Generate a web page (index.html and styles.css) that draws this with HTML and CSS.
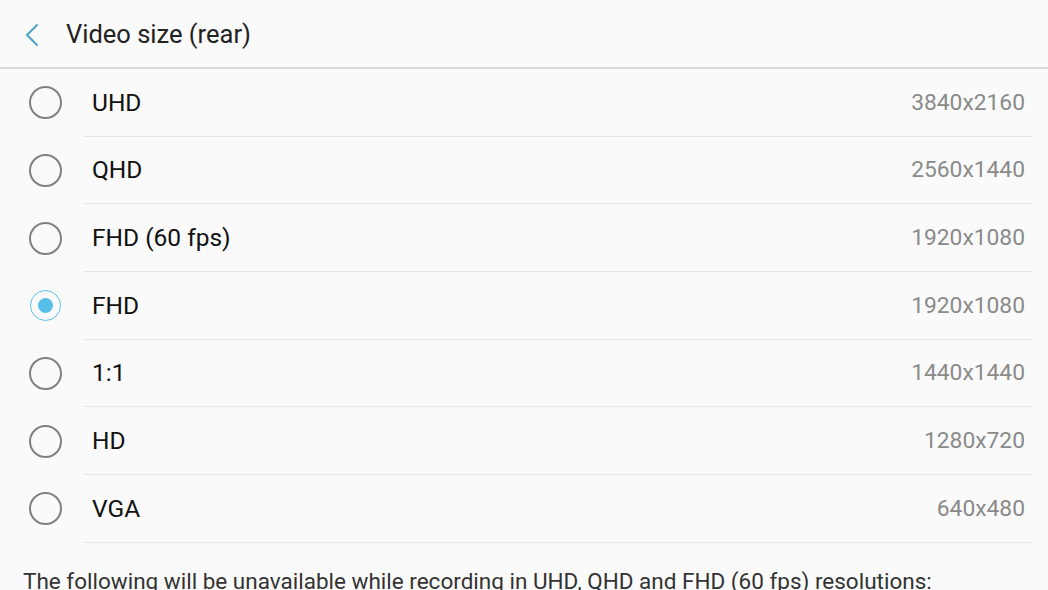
FILE: index.html
```html
<!DOCTYPE html>
<html>
  <head>
    <meta name="viewport" content="width=device-width, initial-scale=1.0" />
    <title>Video size (rear)</title>
    <link rel="stylesheet" href="styles.css">
  </head>
  <body>
    <header class="top">
      <span class="back">
        <svg width="14" height="24" viewBox="0 0 14 24">
          <path d="M12.5 1.5 L2 12 L12.5 22.5" fill="none" stroke="#4ba3c7" stroke-width="2"/>
        </svg>
      </span>
      <h1 class="title">Video size (rear)</h1>
    </header>
    <main>
      <ul class="list">
        <li class="row">
          <span class="radio"></span>
          <div class="cell"><span class="name">UHD</span><span class="val">3840x2160</span></div>
        </li>
        <li class="row">
          <span class="radio"></span>
          <div class="cell"><span class="name">QHD</span><span class="val">2560x1440</span></div>
        </li>
        <li class="row">
          <span class="radio"></span>
          <div class="cell"><span class="name">FHD (60 fps)</span><span class="val">1920x1080</span></div>
        </li>
        <li class="row">
          <span class="radio on"></span>
          <div class="cell"><span class="name">FHD</span><span class="val">1920x1080</span></div>
        </li>
        <li class="row">
          <span class="radio"></span>
          <div class="cell"><span class="name">1:1</span><span class="val">1440x1440</span></div>
        </li>
        <li class="row">
          <span class="radio"></span>
          <div class="cell"><span class="name">HD</span><span class="val">1280x720</span></div>
        </li>
        <li class="row">
          <span class="radio"></span>
          <div class="cell"><span class="name">VGA</span><span class="val">640x480</span></div>
        </li>
      </ul>
      <p class="note">The following will be unavailable while recording in UHD, QHD and FHD (60 fps) resolutions:</p>
    </main>
  </body>
</html>
```

FILE: styles.css
```css
* {
padding: 0;
margin: 0;
box-sizing: border-box;
}
body {
background-color: #fafafa;
font-family: Roboto, "Liberation Sans", sans-serif;
color: #1c1c1c;
overflow: hidden;
}
.top {
height: 69px;
display: flex;
align-items: center;
border-bottom: 2px solid #d9d9d9;
}
.top .back {
display: flex;
width: 66px;
padding-left: 25px;
padding-top: 2px;
}
.top .title {
font-size: 25.5px;
font-weight: normal;
color: #222;
}
.list {
list-style: none;
}
.list .row {
display: flex;
height: 67.67px;
}
.list .radio {
flex: 0 0 84px;
display: flex;
align-items: center;
justify-content: center;
position: relative;
padding-left: 6px;
}
.list .radio::before {
content: "";
width: 29px;
height: 29px;
border-radius: 50%;
border: 2px solid #808080;
}
.list .radio.on::before {
border: 1.5px solid #5bc3ea;
}
.list .radio.on::after {
content: "";
position: absolute;
width: 15px;
height: 15px;
border-radius: 50%;
background-color: #56bfe8;
left: 37.5px;
top: 26.5px;
}
.list .cell {
flex: 1;
display: flex;
align-items: center;
justify-content: space-between;
margin-right: 16px;
padding-left: 8px;
padding-right: 7px;
border-bottom: 1px solid #e6e6e6;
}
.list .name {
font-size: 24.5px;
color: #111;
}
.list .val {
font-size: 22.8px;
color: #8a8a8a;
}
.note {
padding: 25px 0 0 23px;
font-size: 22.5px;
color: #333;
white-space: nowrap;
}
```
